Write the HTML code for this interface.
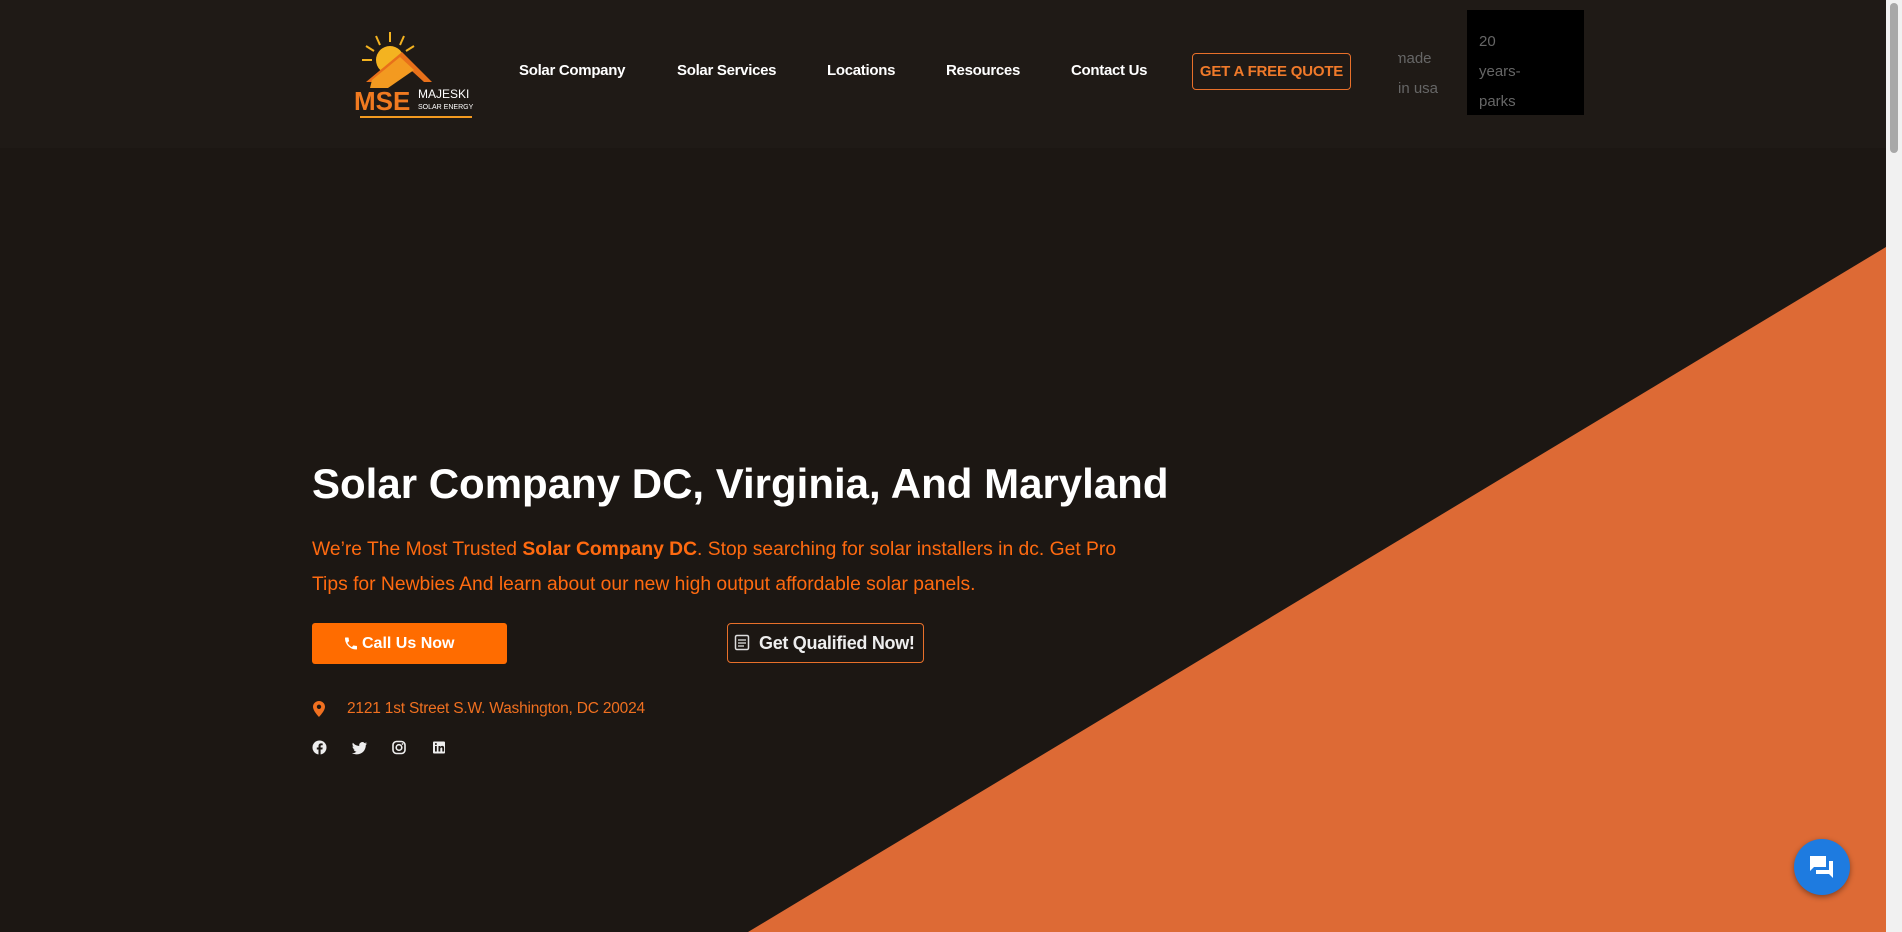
<!DOCTYPE html>
<html><head><meta charset="utf-8"><style>
*{margin:0;padding:0;box-sizing:border-box}
body{width:1902px;height:932px;overflow:hidden;background:#1c1713;font-family:"Liberation Sans",sans-serif;position:relative}
.hdr{position:absolute;left:0;top:0;width:1886px;height:148px;background:#1f1a16}
.nav a{position:absolute;top:62px;color:#fff;font-weight:bold;font-size:15px;letter-spacing:-0.3px;text-decoration:none}
.quote{position:absolute;left:1192px;top:53px;width:159px;height:37px;border:1px solid #e8702a;border-radius:4px;color:#f07a2a;font-size:15px;font-weight:bold;text-align:center;line-height:35px;letter-spacing:-0.2px}
.sb{position:absolute;left:1886px;top:0;width:16px;height:932px;background:#f1f1f1}
.sb div{position:absolute;left:4px;top:3px;width:8px;height:150px;background:#a8a8a8;border-radius:4px}
h1{position:absolute;left:312px;top:460px;color:#fff;font-size:42px;font-weight:bold;white-space:nowrap}
p.t{position:absolute;left:312px;top:532px;width:840px;color:#ff6a10;font-size:19.3px;line-height:35px}
.call{position:absolute;left:312px;top:623px;width:195px;height:41px;background:#ff6c00;border-radius:3px;color:#fff;font-weight:bold;font-size:16px;line-height:41px;padding-left:50px;white-space:nowrap}
.qual{position:absolute;left:727px;top:623px;width:197px;height:40px;border:1px solid #e8702a;border-radius:4px;color:#eee;font-weight:bold;font-size:18px;letter-spacing:-0.3px;line-height:38px;padding-left:31px;white-space:nowrap}
.addr{position:absolute;left:347px;top:700px;color:#f07020;font-size:15.5px;letter-spacing:-0.2px}
</style></head><body>
<svg style="position:absolute;left:0;top:0" width="1902" height="932"><polygon points="1886,247 1886,932 748,932" fill="#dd6a35"/></svg>
<div class="hdr"></div>
<svg style="position:absolute;left:352px;top:30px" width="132" height="90" viewBox="0 0 132 90">
<circle cx="38" cy="30" r="14" fill="#f4b320"/>
<g stroke="#f4b320" stroke-width="2"><line x1="38" y1="2" x2="38" y2="12"/><line x1="24" y1="6" x2="28" y2="15"/><line x1="52" y1="6" x2="48" y2="15"/><line x1="14" y1="16" x2="22" y2="21"/><line x1="62" y1="16" x2="54" y2="21"/><line x1="10" y1="30" x2="20" y2="30"/></g>
<polygon points="14,52 50,22 80,52 72,52 50,32 24,52" fill="#e8701a"/>
<polygon points="20,50 48,27 62,40 36,58 18,58" fill="#f39a20"/>
<text x="2" y="80" font-family="Liberation Sans" font-size="26" fill="#f07a20" font-weight="bold">MSE</text>
<text x="66" y="68" font-family="Liberation Sans" font-size="12" fill="#fff">MAJESKI</text>
<text x="66" y="79" font-family="Liberation Sans" font-size="7" fill="#fff">SOLAR ENERGY</text>
<rect x="8" y="86" width="112" height="2" fill="#f39a20"/>
</svg>
<div class="nav"><a style="left:519px">Solar Company</a><a style="left:677px">Solar Services</a><a style="left:827px">Locations</a><a style="left:946px">Resources</a><a style="left:1071px">Contact Us</a></div>
<div class="quote">GET A FREE QUOTE</div>
<div style="position:absolute;left:1398px;top:44px;color:#666;font-size:15px;line-height:30px;width:42px;overflow:hidden;white-space:nowrap;text-indent:-4px">made<br>in usa</div>
<div style="position:absolute;left:1467px;top:10px;width:117px;height:105px;background:#000;color:#666;font-size:15px;padding:0 0 0 12px;line-height:30px;overflow:hidden"><div style="margin-top:17px">20<br>years-<br>parks</div></div>
<h1>Solar Company DC, Virginia, And Maryland</h1>
<p class="t">We’re The Most Trusted <b>Solar Company DC</b>. Stop searching for solar installers in dc. Get Pro Tips for Newbies And learn about our new high output affordable solar panels.</p>
<div class="call">Call Us Now</div>
<svg style="position:absolute;left:343px;top:635px" width="16" height="17" viewBox="0 0 24 24"><path fill="#fff" d="M6.6 10.8c1.4 2.8 3.8 5.1 6.6 6.6l2.2-2.2c.3-.3.7-.4 1-.2 1.1.4 2.3.6 3.6.6.6 0 1 .4 1 1V20c0 .6-.4 1-1 1C10.6 21 3 13.4 3 4c0-.6.4-1 1-1h3.5c.6 0 1 .4 1 1 0 1.3.2 2.5.6 3.6.1.3 0 .7-.2 1z"/></svg>
<div class="qual">Get Qualified Now!</div>
<svg style="position:absolute;left:734px;top:634px" width="16" height="17" viewBox="0 0 16 17"><rect x="1.5" y="1.5" width="13" height="14" rx="1.5" fill="none" stroke="#ddd" stroke-width="1.5"/><g stroke="#ddd" stroke-width="1.3"><line x1="4" y1="6" x2="12" y2="6"/><line x1="4" y1="9" x2="12" y2="9"/><line x1="4" y1="12" x2="10" y2="12"/></g></svg>
<svg style="position:absolute;left:313px;top:701px" width="12" height="16" viewBox="0 0 12 16"><path fill="#f07020" d="M6 0C2.7 0 0 2.6 0 5.8 0 10 6 16 6 16s6-6 6-10.2C12 2.6 9.3 0 6 0zm0 8a2.2 2.2 0 110-4.4A2.2 2.2 0 016 8z"/></svg>
<div class="addr">2121 1st Street S.W. Washington, DC 20024</div>
<svg style="position:absolute;left:312px;top:740px" width="140" height="16" viewBox="0 0 140 16">
<circle cx="7.5" cy="7.5" r="7" fill="#eee"/><path d="M8.6 15V9.5h1.8l.3-2H8.6V6.3c0-.6.2-1 1-1h1.1V3.5c-.2 0-.9-.1-1.6-.1-1.6 0-2.6 1-2.6 2.7v1.4H4.8v2h1.7V15z" fill="#1c1713"/>
<path d="M55 3.5c-.6.3-1.2.4-1.8.5.7-.4 1.1-1 1.4-1.7-.6.4-1.3.6-2 .8a3.1 3.1 0 00-5.3 2.8C44.7 5.8 42.4 4.6 40.9 2.7c-.8 1.4-.4 3.2 1 4.1-.5 0-1-.2-1.4-.4 0 1.5 1.1 2.8 2.5 3.1-.5.1-.9.1-1.4 0 .4 1.3 1.6 2.1 2.900 2.200A6.3 6.3 0 0140 13c1.4.9 3.1 1.4 4.8 1.4 5.8 0 9-4.8 9-9v-.4c.6-.4 1.1-1 1.5-1.5z" fill="#eee"/>
<rect x="81" y="1.5" width="12" height="12" rx="3.5" fill="none" stroke="#eee" stroke-width="1.6"/><circle cx="87" cy="7.5" r="2.8" fill="none" stroke="#eee" stroke-width="1.6"/><circle cx="90.5" cy="4" r=".9" fill="#eee"/>
<rect x="121" y="1.5" width="12" height="12" rx="1" fill="#eee"/><rect x="123" y="6" width="1.8" height="5.5" fill="#1c1713"/><circle cx="123.9" cy="4" r="1" fill="#1c1713"/><path d="M126.5 6h1.7v1c.4-.7 1.1-1.1 2-1.1 1.5 0 1.9 1 1.9 2.3v3.3h-1.8V8.6c0-.7-.2-1.1-.9-1.1-.7 0-1.1.5-1.1 1.2v2.8h-1.8z" fill="#1c1713"/>
</svg>
<div style="position:absolute;left:1794px;top:839px;width:56px;height:56px;border-radius:50%;background:#1e7be0;box-shadow:0 2px 6px rgba(0,0,0,.4)"></div>
<svg style="position:absolute;left:1808px;top:854px" width="28" height="26" viewBox="0 0 28 26"><path d="M2 2h16v11H6l-4 4z" fill="#fff"/><path d="M21 7h4v17l-4-4H8v-4h13z" fill="#fff"/></svg>
<div class="sb"><div></div></div>
</body></html>
